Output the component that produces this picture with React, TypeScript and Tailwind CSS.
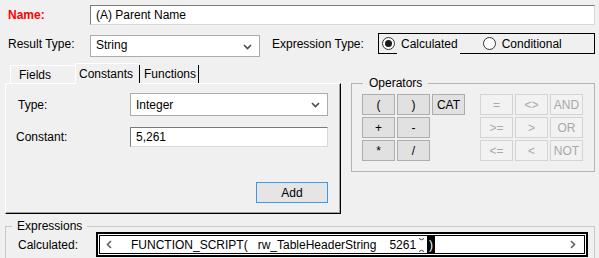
import React from 'react';

// small chevron used by the drop-down boxes
const Chevron = () => (
  <svg width="9" height="6" viewBox="0 0 9 6" className="shrink-0">
    <path d="M1 1l3.5 3.5L8 1" fill="none" stroke="#4a4a4a" strokeWidth="1.6" />
  </svg>
);

const Arrow: React.FC<{ dir: 'left' | 'right' }> = ({ dir }) => (
  <svg width="6" height="9" viewBox="0 0 6 9" className="shrink-0">
    <path d={dir === 'left' ? 'M5 1L1.5 4.5 5 8' : 'M1 1l3.5 3.5L1 8'} fill="none" stroke="#606060" strokeWidth="1.6" />
  </svg>
);

// insertion mark drawn next to the selection
const Caret = () => (
  <svg width="7" height="16" viewBox="0 0 7 16" className="shrink-0">
    <path d="M1 1.5q2.5 2.5 5 0" fill="none" stroke="#333" strokeWidth="1" />
    <path d="M1 14.5q2.5 -2.5 5 0" fill="none" stroke="#333" strokeWidth="1" />
  </svg>
);

const Radio: React.FC<{ checked?: boolean }> = ({ checked }) => (
  <span className="w-[13px] h-[13px] rounded-full border border-[#333] bg-white flex items-center justify-center shrink-0">
    {checked && <span className="w-[7px] h-[7px] rounded-full bg-[#1a1a1a]" />}
  </span>
);

const OpButton: React.FC<{ label: string; disabled?: boolean }> = ({ label, disabled }) => (
  <button
    className={`w-[33px] h-[21px] flex items-center justify-center text-[12px] leading-none border ${
      disabled ? 'border-[#d4d4d4] bg-[#f2f2f2] text-[#a8a8a8]' : 'border-[#adadad] bg-[#e1e1e1] text-black'
    }`}
  >
    {label}
  </button>
);

const App: React.FC = () => {
  return (
    <div className="w-[599px] h-[258px] bg-[#f0f0f0] overflow-hidden text-[12px] leading-[14px] text-black font-['Liberation_Sans',Arial,sans-serif]">
      {/* name */}
      <div className="flex items-center h-[20px] mt-[5px]">
        <span className="w-[90px] pl-[8px] font-bold text-[#ff0000]">Name:</span>
        <div className="w-[505px] h-[20px] bg-white border border-[#d9d9d9] border-t-[#7a7a7a] border-l-[#7a7a7a] pl-[5px] flex items-center">
          (A) Parent Name
        </div>
      </div>

      {/* result type / expression type */}
      <div className="flex items-start h-[24px] mt-[8px]">
        <span className="w-[90px] pl-[8px] mt-[4px]">Result Type:</span>
        <div className="w-[170px] h-[22px] mt-[2px] bg-white border border-[#acacac] flex items-start justify-between pl-[5px] pr-[7px] pt-[2px]">
          <span>String</span>
          <span className="mt-[6px]"><Chevron /></span>
        </div>
        <span className="w-[106px] ml-[12px] mt-[4px]">Expression Type:</span>
        <div className="relative w-[217px] h-[21px] border border-black flex items-center pl-[3px]">
          <Radio checked />
          <span className="ml-[6px]">Calculated</span>
          <span className="ml-[25px]"><Radio /></span>
          <span className="ml-[6px]">Conditional</span>
          <div className="absolute left-[18px] -bottom-px w-[63px] h-px bg-[#f0f0f0]" />
        </div>
      </div>

      {/* tabs + operators */}
      <div className="flex items-start mt-[6px]">
        <div className="ml-[5px] w-[336px]">
          <div className="flex items-start h-[20px] pl-[5px]">
            <div className="w-[65px] h-[18px] mt-[2px] border-t border-l border-white pl-[8px] pt-[2px]">Fields</div>
            <div className="relative z-10 w-[64px] h-[21px] border-t border-l border-white bg-[#f0f0f0] pl-[3px] pt-[3px]">Constants</div>
            <div className="h-[18px] mt-[2px] border-l border-r border-black pl-[4px] pr-[2px] pt-[2px]">Functions</div>
          </div>
          <div className="h-[131px] border-t border-l border-white border-r border-b border-r-black border-b-black shadow-[inset_-1px_-1px_0_#a0a0a0]">
            <div className="flex items-center mt-[9px]">
              <span className="w-[124px] pl-[12px]">Type:</span>
              <div className="w-[198px] h-[23px] bg-white border border-[#acacac] flex items-center justify-between pl-[5px] pr-[7px]">
                <span>Integer</span>
                <Chevron />
              </div>
            </div>
            <div className="flex items-center mt-[11px]">
              <span className="w-[124px] pl-[10px]">Constant:</span>
              <div className="w-[198px] h-[20px] bg-white border border-[#d9d9d9] border-t-[#7a7a7a] border-l-[#7a7a7a] pl-[5px] flex items-center">
                5,261
              </div>
            </div>
            <button className="ml-[250px] mt-[35px] w-[72px] h-[21px] border border-[#3c9be8] bg-[#e5e5e5] flex items-center justify-center">
              Add
            </button>
          </div>
        </div>

        <fieldset className="ml-[10px] mt-[13px] w-[244px] h-[96px] border border-[#b4b4b4]">
          <legend className="ml-[11px] px-[6px]">Operators</legend>
          <div className="flex mt-[4px] ml-[10px] gap-[15px]">
            <div className="grid grid-cols-3 gap-[2px] w-[103px]">
              <OpButton label="(" />
              <OpButton label=")" />
              <OpButton label="CAT" />
              <OpButton label="+" />
              <OpButton label="-" />
              <span />
              <OpButton label="*" />
              <OpButton label="/" />
            </div>
            <div className="grid grid-cols-3 gap-[2px] w-[103px]">
              <OpButton label="=" disabled />
              <OpButton label="<>" disabled />
              <OpButton label="AND" disabled />
              <OpButton label=">=" disabled />
              <OpButton label=">" disabled />
              <OpButton label="OR" disabled />
              <OpButton label="<=" disabled />
              <OpButton label="<" disabled />
              <OpButton label="NOT" disabled />
            </div>
          </div>
        </fieldset>
      </div>

      {/* expressions */}
      <fieldset className="ml-[5px] mt-[6px] w-[590px] h-[50px] border border-[#c8c8c8]">
        <legend className="ml-[6px] px-[5px] leading-[12px]">Expressions</legend>
        <div className="flex items-center">
          <span className="w-[90px] pl-[12px]">Calculated:</span>
          <div className="w-[492px] h-[25px] bg-white border-2 border-black shadow-[inset_0_0_0_1px_#fff,inset_0_0_0_2px_#000] flex items-center pl-[8px] pr-[10px]">
            <Arrow dir="left" />
            <span className="ml-[19px] whitespace-pre">FUNCTION_SCRIPT(</span>
            <span className="ml-[10px] whitespace-pre">rw_TableHeaderString</span>
            <span className="ml-[13px] whitespace-pre">5261</span>
            <span className="ml-[2px]"><Caret /></span>
            <span className="ml-[2px] bg-black text-white px-[2px] leading-[18px]">)</span>
            <span className="flex-1" />
            <Arrow dir="right" />
          </div>
        </div>
      </fieldset>
    </div>
  );
};

export default App;
